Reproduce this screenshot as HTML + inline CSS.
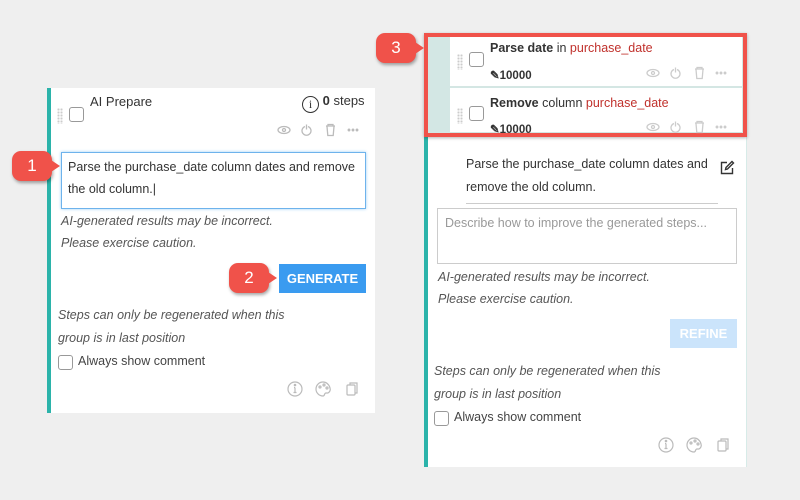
<!DOCTYPE html>
<html><head><style>
*{box-sizing:border-box;margin:0;padding:0}
body{width:800px;height:500px;background:#efefef;font-family:"Liberation Sans",sans-serif;position:relative;overflow:hidden;color:#333}
.abs{position:absolute}
.card{background:#fff}
.it{font-style:italic;color:#555;font-size:12.5px}
.cb{position:absolute;width:15px;height:15px;border:1px solid #999;border-radius:3px;background:#fff}
.grip{position:absolute;width:6px;height:16px;background-image:radial-gradient(#ccc 1px,transparent 1.2px);background-size:3px 3px}
.badge{position:absolute;background:#f0524a;color:#fff;font-size:17px;text-align:center;border-radius:9px;box-shadow:1px 2px 3px rgba(0,0,0,.35)}
.badge:after{content:"";position:absolute;right:-8px;top:50%;margin-top:-6px;border-left:9px solid #f0524a;border-top:6px solid transparent;border-bottom:6px solid transparent}
.red{color:#c0312c}
</style></head><body>

<!-- Left card -->
<div class="abs card" style="left:47px;top:88px;width:328px;height:325px;border-left:4px solid #2bb3aa"></div>
<div class="grip" style="left:57px;top:108px"></div>
<div class="cb" style="left:69px;top:107px"></div>
<div class="abs" style="left:90px;top:94px;font-size:13px">AI Prepare</div>
<div class="abs" style="left:302px;top:93px;font-size:13px"><span style="display:inline-block;width:17px;height:17px;border:1.5px solid #333;border-radius:50%;font-size:12px;text-align:center;line-height:14px;font-family:'Liberation Serif',serif;vertical-align:-3px">i</span> <b>0</b> steps</div>
<svg class="abs" style="left:277px;top:122px" width="86" height="16" viewBox="0 0 86 16" fill="none" stroke="#bbb" stroke-width="1.3">
<ellipse cx="7" cy="8" rx="6" ry="3.5"/><circle cx="7" cy="8" r="1.5"/>
<path d="M28 4.5a4.5 4.5 0 1 0 3 0M29.5 2.5v5"/>
<path d="M49 4h9M51 4V2.5h5V4M50 4.5l.8 9h5.4l.8-9"/>
<circle cx="72" cy="8" r=".8" fill="#bbb"/><circle cx="76" cy="8" r=".8" fill="#bbb"/><circle cx="80" cy="8" r=".8" fill="#bbb"/>
</svg>
<div class="abs" style="left:61px;top:152px;width:305px;height:57px;border:1px solid #6eb3ec;box-shadow:0 0 3px #9cd0f5;font-size:12.5px;line-height:22px;padding:3px 6px;color:#333">Parse the purchase_date column dates and remove the old column.|</div>
<div class="abs it" style="left:61px;top:210px;line-height:22px">AI-generated results may be incorrect.<br>Please exercise caution.</div>
<div class="abs" style="left:279px;top:264px;width:87px;height:29px;background:#3a9bf0;color:#fff;font-weight:bold;font-size:13px;text-align:center;line-height:29px">GENERATE</div>
<div class="abs it" style="left:58px;top:304px;line-height:23px">Steps can only be regenerated when this<br>group is in last position</div>
<div class="cb" style="left:58px;top:355px"></div>
<div class="abs" style="left:78px;top:354px;font-size:12.5px;color:#444">Always show comment</div>
<svg class="abs" style="left:286px;top:380px" width="75" height="18" viewBox="0 0 75 18" fill="none" stroke="#bbb" stroke-width="1.2">
<circle cx="9" cy="9" r="7"/><path d="M9 7.5v5M7.5 12.5h3M8 7.5h1"/><circle cx="9" cy="5" r=".7" fill="#bbb"/>
<path d="M37 2a7 7 0 1 0 0 14c2 0 1-3 3-3h2a4 4 0 0 0 2-5c-1-4-4-6-7-6z"/><circle cx="34" cy="7" r="1"/><circle cx="38" cy="5" r="1"/><circle cx="41" cy="8" r="1"/>
<rect x="61" y="5" width="8" height="10" rx="1"/><path d="M64 5V3h7v10h-2"/>
</svg>

<!-- Right panel -->
<div class="abs card" style="left:424px;top:136px;width:323px;height:331px;border-left:4px solid #2bb3aa;border-right:1px solid #d7ebe8"></div>
<div class="abs" style="left:424px;top:33px;width:323px;height:104px;border:4px solid #f0524a;background:#d3e7e4;box-shadow:0 1px 3px rgba(0,0,0,.3)"></div>
<div class="abs card" style="left:450px;top:37px;width:292px;height:50px;border-bottom:1px solid #d5e6e3"></div>
<div class="abs card" style="left:450px;top:88px;width:292px;height:44px"></div>
<div class="grip" style="left:457px;top:54px"></div>
<div class="cb" style="left:469px;top:52px"></div>
<div class="abs" style="left:490px;top:41px;font-size:12.5px"><b>Parse date</b> in <span class="red">purchase_date</span></div>
<div class="abs" style="left:490px;top:68px;font-size:11.5px;font-weight:bold">&#9998;10000</div>
<div class="grip" style="left:457px;top:108px"></div>
<div class="cb" style="left:469px;top:106px"></div>
<div class="abs" style="left:490px;top:96px;font-size:12.5px"><b>Remove</b> column <span class="red">purchase_date</span></div>
<div class="abs" style="left:490px;top:122px;font-size:11.5px;font-weight:bold">&#9998;10000</div>
<svg class="abs" style="left:645px;top:65px" width="86" height="16" viewBox="0 0 86 16" fill="none" stroke="#ccc" stroke-width="1.3">
<ellipse cx="8" cy="8" rx="6" ry="3.5"/><circle cx="8" cy="8" r="1.5"/>
<path d="M29 4.5a4.5 4.5 0 1 0 3 0M30.5 2.5v5"/>
<path d="M50 4h9M52 4V2.5h5V4M51 4.5l.8 9h5.4l.8-9"/>
<circle cx="72" cy="8" r=".8" fill="#ccc"/><circle cx="76" cy="8" r=".8" fill="#ccc"/><circle cx="80" cy="8" r=".8" fill="#ccc"/>
</svg>
<svg class="abs" style="left:645px;top:119px" width="86" height="16" viewBox="0 0 86 16" fill="none" stroke="#ccc" stroke-width="1.3">
<ellipse cx="8" cy="8" rx="6" ry="3.5"/><circle cx="8" cy="8" r="1.5"/>
<path d="M29 4.5a4.5 4.5 0 1 0 3 0M30.5 2.5v5"/>
<path d="M50 4h9M52 4V2.5h5V4M51 4.5l.8 9h5.4l.8-9"/>
<circle cx="72" cy="8" r=".8" fill="#ccc"/><circle cx="76" cy="8" r=".8" fill="#ccc"/><circle cx="80" cy="8" r=".8" fill="#ccc"/>
</svg>
<div class="abs" style="left:466px;top:153px;width:252px;font-size:12.5px;line-height:23px;border-bottom:1px solid #ccc;padding-bottom:4px">Parse the purchase_date column dates and remove the old column.</div>
<svg class="abs" style="left:719px;top:160px" width="16" height="16" viewBox="0 0 16 16" fill="none" stroke="#333" stroke-width="1.4"><path d="M8 2.5H2.5v11h11V8"/><path d="M6.5 9.5l.5-2 6-6 1.5 1.5-6 6z"/></svg>
<div class="abs" style="left:437px;top:208px;width:300px;height:56px;border:1px solid #ccc;font-size:12.5px;color:#999;padding:7px 7px">Describe how to improve the generated steps...</div>
<div class="abs it" style="left:438px;top:266px;line-height:22px">AI-generated results may be incorrect.<br>Please exercise caution.</div>
<div class="abs" style="left:670px;top:319px;width:67px;height:29px;background:#cbe4fb;color:#fff;font-weight:bold;font-size:13px;text-align:center;line-height:29px">REFINE</div>
<div class="abs it" style="left:434px;top:360px;line-height:23px">Steps can only be regenerated when this<br>group is in last position</div>
<div class="cb" style="left:434px;top:411px"></div>
<div class="abs" style="left:454px;top:410px;font-size:12.5px;color:#444">Always show comment</div>
<svg class="abs" style="left:657px;top:436px" width="75" height="18" viewBox="0 0 75 18" fill="none" stroke="#bbb" stroke-width="1.2">
<circle cx="9" cy="9" r="7"/><path d="M9 7.5v5M7.5 12.5h3M8 7.5h1"/><circle cx="9" cy="5" r=".7" fill="#bbb"/>
<path d="M37 2a7 7 0 1 0 0 14c2 0 1-3 3-3h2a4 4 0 0 0 2-5c-1-4-4-6-7-6z"/><circle cx="34" cy="7" r="1"/><circle cx="38" cy="5" r="1"/><circle cx="41" cy="8" r="1"/>
<rect x="61" y="5" width="8" height="10" rx="1"/><path d="M64 5V3h7v10h-2"/>
</svg>

<!-- Badges -->
<div class="badge" style="left:12px;top:151px;width:40px;height:30px;line-height:30px">1</div>
<div class="badge" style="left:229px;top:263px;width:40px;height:30px;line-height:30px">2</div>
<div class="badge" style="left:376px;top:33px;width:40px;height:30px;line-height:30px">3</div>
</body></html>
